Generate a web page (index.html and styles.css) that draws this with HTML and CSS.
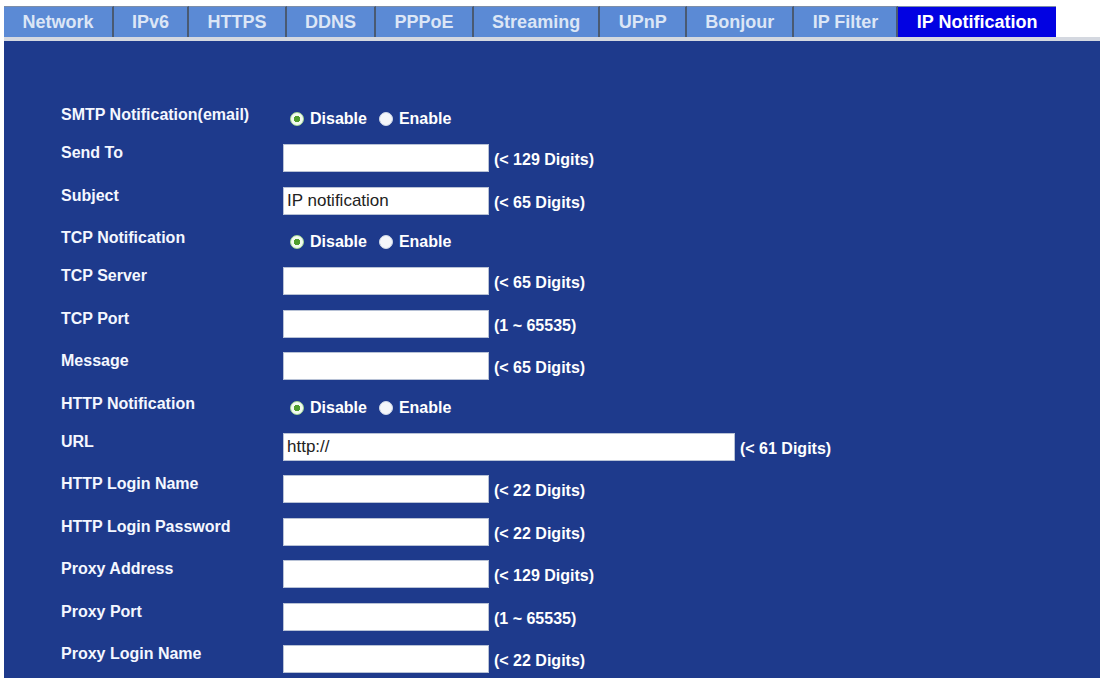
FILE: index.html
```html
<!DOCTYPE html>
<html lang="en">
<head>
    <meta charset="UTF-8">
    <title>IP Notification</title>
    <link rel="stylesheet" href="styles.css">
</head>
<body>
    <div class="page">
        <ul class="tabs">
            <li>Network</li>
            <li>IPv6</li>
            <li>HTTPS</li>
            <li>DDNS</li>
            <li>PPPoE</li>
            <li>Streaming</li>
            <li>UPnP</li>
            <li>Bonjour</li>
            <li>IP Filter</li>
            <li class="active">IP Notification</li>
        </ul>

        <div class="panel">
            <div class="row radio_row">
                <div class="label">SMTP Notification(email)</div>
                <div class="field">
                    <label><input type="radio" name="smtp" checked> Disable</label>
                    <label><input type="radio" name="smtp"> Enable</label>
                </div>
            </div>
            <div class="row">
                <div class="label">Send To</div>
                <div class="field"><input type="text" class="box"><span class="hint">(&lt; 129 Digits)</span></div>
            </div>
            <div class="row">
                <div class="label">Subject</div>
                <div class="field"><input type="text" class="box" value="IP notification"><span class="hint">(&lt; 65 Digits)</span></div>
            </div>
            <div class="row radio_row">
                <div class="label">TCP Notification</div>
                <div class="field">
                    <label><input type="radio" name="tcp" checked> Disable</label>
                    <label><input type="radio" name="tcp"> Enable</label>
                </div>
            </div>
            <div class="row">
                <div class="label">TCP Server</div>
                <div class="field"><input type="text" class="box"><span class="hint">(&lt; 65 Digits)</span></div>
            </div>
            <div class="row">
                <div class="label">TCP Port</div>
                <div class="field"><input type="text" class="box"><span class="hint">(1 ~ 65535)</span></div>
            </div>
            <div class="row">
                <div class="label">Message</div>
                <div class="field"><input type="text" class="box"><span class="hint">(&lt; 65 Digits)</span></div>
            </div>
            <div class="row radio_row">
                <div class="label">HTTP Notification</div>
                <div class="field">
                    <label><input type="radio" name="http" checked> Disable</label>
                    <label><input type="radio" name="http"> Enable</label>
                </div>
            </div>
            <div class="row">
                <div class="label">URL</div>
                <div class="field"><input type="text" class="box wide" value="http://"><span class="hint">(&lt; 61 Digits)</span></div>
            </div>
            <div class="row">
                <div class="label">HTTP Login Name</div>
                <div class="field"><input type="text" class="box"><span class="hint">(&lt; 22 Digits)</span></div>
            </div>
            <div class="row">
                <div class="label">HTTP Login Password</div>
                <div class="field"><input type="password" class="box"><span class="hint">(&lt; 22 Digits)</span></div>
            </div>
            <div class="row">
                <div class="label">Proxy Address</div>
                <div class="field"><input type="text" class="box"><span class="hint">(&lt; 129 Digits)</span></div>
            </div>
            <div class="row">
                <div class="label">Proxy Port</div>
                <div class="field"><input type="text" class="box"><span class="hint">(1 ~ 65535)</span></div>
            </div>
            <div class="row">
                <div class="label">Proxy Login Name</div>
                <div class="field"><input type="text" class="box"><span class="hint">(&lt; 22 Digits)</span></div>
            </div>
        </div>
    </div>
</body>
</html>
```

FILE: styles.css
```css
body {
    margin: 0;
    background: #fff;
    font-family: "Liberation Sans", Arial, sans-serif;
}

.page {
    padding: 6px 3px 0 4px;
}

/* tab strip */
.tabs {
    display: flex;
    margin: 0;
    padding: 0;
    list-style: none;
    border-bottom: 4px solid #d4d8e0;
}

.tabs li {
    height: 30px;
    line-height: 30px;
    padding: 0 18px 0 18.5px;
    background: #5b8ad5;
    color: #dce6f6;
    font-size: 18px;
    font-weight: bold;
    border-top: 1px solid #7d8ea8;
    border-right: 2px solid #4a5a72;
}

.tabs li:last-child {
    border-right: none;
}

.tabs li.active {
    background: #0202e2;
    color: #fff;
}

/* settings panel */
.panel {
    height: 637px;
    box-sizing: border-box;
    padding: 63px 0 0 57px;
    background: #1e3a8c;
    overflow: hidden;
}

.row {
    display: flex;
    height: 42.5px;
}

.row.radio_row {
    height: 38px;
}

.label {
    width: 222px;
    flex-shrink: 0;
    line-height: 22px;
    font-size: 16px;
    font-weight: bold;
    color: #f4f7ff;
}

.field {
    display: flex;
    align-items: center;
    align-self: flex-start;
    padding-top: 2px;
    color: #fff;
    font-weight: bold;
}

.radio_row .field {
    padding-top: 6px;
    line-height: 18px;
    font-size: 16px;
}

.radio_row label {
    display: flex;
    align-items: center;
    margin-right: 5px;
    margin-left: 2px;
}

.radio_row input {
    appearance: none;
    width: 14px;
    height: 14px;
    margin: 0 6px 0 5px;
    border-radius: 50%;
    background: #f4f6fa;
    border: 1px solid #cfd8e8;
    box-sizing: border-box;
}

.radio_row input:checked {
    background: radial-gradient(circle, #4f9e2e 0 3px, #f2fbef 3.5px);
    border-color: #a8dc94;
}

.box {
    width: 206px;
    height: 28px;
    box-sizing: border-box;
    margin: 0;
    padding: 0 3px;
    border: 1px solid #b8c2d6;
    background: #fff;
    font-family: "Liberation Sans", Arial, sans-serif;
    font-size: 17px;
    color: #222;
}

.box.wide {
    width: 452px;
}

.hint {
    margin: 4px 0 0 5px;
    font-size: 16px;
}
```
